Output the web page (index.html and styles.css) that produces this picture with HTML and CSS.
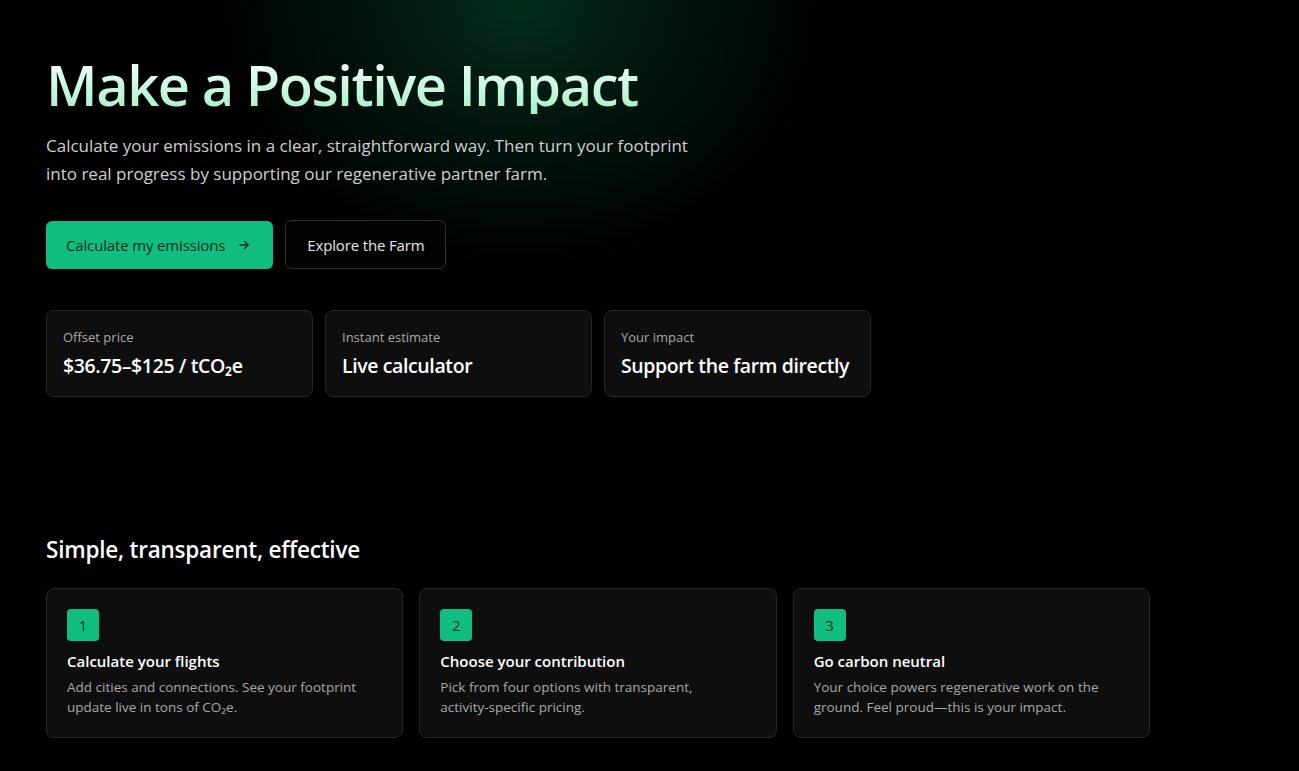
FILE: index.html
```html
<!DOCTYPE html>
<html lang="en">
<head>
<meta charset="utf-8">
<title>Make a Positive Impact</title>
<link rel="stylesheet" href="styles.css">
</head>
<body>
<div class="glow"></div>
<main class="page">
  <section class="hero">
    <h1 class="title">Make a Positive Impact</h1>
    <p class="lead">Calculate your emissions in a clear, straightforward way. Then turn your footprint into real progress by supporting our regenerative partner farm.</p>
    <div class="actions">
      <a class="btn btn-primary" href="#">Calculate my emissions
        <svg class="arrow" width="16" height="16" viewBox="0 0 24 24" fill="none" stroke="currentColor" stroke-width="2.2" stroke-linecap="round" stroke-linejoin="round"><path d="M5 12h14"/><path d="M13 6l6 6-6 6"/></svg>
      </a>
      <a class="btn btn-ghost" href="#">Explore the Farm</a>
    </div>
    <div class="stats">
      <div class="stat">
        <div class="stat-label">Offset price</div>
        <div class="stat-value">$36.75–$125 / tCO₂e</div>
      </div>
      <div class="stat">
        <div class="stat-label">Instant estimate</div>
        <div class="stat-value">Live calculator</div>
      </div>
      <div class="stat">
        <div class="stat-label">Your impact</div>
        <div class="stat-value">Support the farm directly</div>
      </div>
    </div>
  </section>
  <section class="how">
    <h2 class="how-title">Simple, transparent, effective</h2>
    <div class="steps">
      <div class="step">
        <div class="badge">1</div>
        <h3 class="step-title">Calculate your flights</h3>
        <p class="step-text">Add cities and connections. See your footprint update live in tons of CO₂e.</p>
      </div>
      <div class="step">
        <div class="badge">2</div>
        <h3 class="step-title">Choose your contribution</h3>
        <p class="step-text">Pick from four options with transparent, activity-specific pricing.</p>
      </div>
      <div class="step">
        <div class="badge">3</div>
        <h3 class="step-title">Go carbon neutral</h3>
        <p class="step-text">Your choice powers regenerative work on the ground. Feel proud—this is your impact.</p>
      </div>
    </div>
  </section>
</main>
</body>
</html>
```
FILE: styles.css
```css
* { box-sizing: border-box; }
html, body {
  margin: 0;
  background: #000;
  color: #fff;
  font-family: "Open Sans", "Noto Sans", "Liberation Sans", sans-serif;
  overflow: hidden;
}
body { position: relative; min-height: 771px; }
.glow {
  position: absolute;
  left: 210px;
  top: -270px;
  width: 620px;
  height: 540px;
  background: radial-gradient(closest-side, rgba(4, 48, 30, 0.95), rgba(3, 38, 24, 0.65) 40%, rgba(0, 0, 0, 0) 100%);
  pointer-events: none;
}
.page {
  position: relative;
  padding: 0 46px;
}
.hero { padding-top: 54px; }
.title {
  margin: 0;
  font-size: 56px;
  line-height: 60px;
  font-weight: 600;
  letter-spacing: -0.026em;
  background: linear-gradient(to bottom, #effdf6 15%, #a3f0c8 100%);
  -webkit-background-clip: text;
  background-clip: text;
  color: transparent;
  width: max-content;
}
.lead {
  margin: 18px 0 0;
  max-width: 660px;
  font-size: 17px;
  line-height: 28px;
  color: #cfcfcf;
}
.actions {
  display: flex;
  gap: 12px;
  margin-top: 32px;
}
.btn {
  display: inline-flex;
  align-items: center;
  gap: 12px;
  height: 48px;
  padding: 0 20px;
  border-radius: 6px;
  font-size: 15px;
  text-decoration: none;
  letter-spacing: -0.01em;
}
.btn-primary {
  background: #10bf80;
  color: #062a1c;
  margin-top: 1px;
  padding-right: 22px;
}
.btn-ghost {
  border: 1px solid #2e2e2e;
  color: #e6e6e6;
  background: #030303;
  height: 49px;
  padding: 0 21px;
}
.arrow { width: 14px; height: 14px; }
.stats {
  display: grid;
  grid-template-columns: repeat(3, 267px);
  gap: 12px;
  margin-top: 41px;
}
.stat {
  background: #0e0e0e;
  border: 1px solid #262626;
  border-radius: 8px;
  padding: 16px;
}
.stat-label {
  font-size: 13px;
  line-height: 20px;
  color: #a8a8a8;
}
.stat-value {
  margin-top: 5px;
  font-size: 19.5px;
  line-height: 28px;
  font-weight: 600;
  color: #fff;
  letter-spacing: -0.02em;
  white-space: nowrap;
}
.how { padding-top: 137px; }
.how-title {
  margin: 0;
  font-size: 22.5px;
  line-height: 32px;
  font-weight: 600;
  letter-spacing: -0.01em;
}
.steps {
  display: grid;
  grid-template-columns: repeat(3, 1fr);
  gap: 16px;
  width: 1104px;
  margin-top: 22px;
}
.step {
  background: #0e0e0e;
  border: 1px solid #262626;
  border-radius: 8px;
  padding: 20px;
}
.badge {
  width: 32px;
  height: 32px;
  border-radius: 4px;
  background: #10bf80;
  color: #073321;
  display: flex;
  align-items: center;
  justify-content: center;
  font-size: 15px;
}
.step-title {
  margin: 8px 0 0;
  font-size: 15px;
  line-height: 24px;
  font-weight: 600;
}
.step-text {
  margin: 4px 0 0;
  font-size: 13.5px;
  line-height: 20px;
  color: #a8a8a8;
  max-width: 292px;
}
```
